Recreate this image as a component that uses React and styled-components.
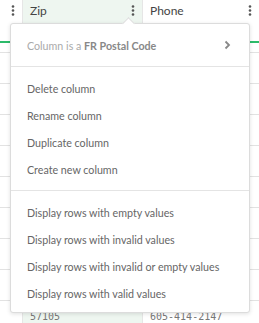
import React from 'react'
import styled, { createGlobalStyle } from 'styled-components'

const GlobalStyle = createGlobalStyle`
  html, body {
    margin: 0;
    padding: 0;
    background: #fff;
    overflow: hidden;
  }
  body {
    font-family: Lato, "Open Sans", "Liberation Sans", sans-serif;
  }
`

// rows under the open menu are covered, only the last one peeks out
const rows = [
  { zip: '', phone: '' },
  { zip: '', phone: '' },
  { zip: '', phone: '' },
  { zip: '', phone: '' },
  { zip: '', phone: '' },
  { zip: '', phone: '' },
  { zip: '', phone: '' },
  { zip: '', phone: '' },
  { zip: '57105', phone: '605-414-2147' },
]

function Kebab() {
  return (
    <svg width="4" height="11" viewBox="0 0 4 11">
      <circle cx="2" cy="1.5" r="1.3" fill="#555" />
      <circle cx="2" cy="5.5" r="1.3" fill="#555" />
      <circle cx="2" cy="9.5" r="1.3" fill="#555" />
    </svg>
  )
}

function App() {
  return (
    <>
      <GlobalStyle />
      <Page>
        <Grid>
          <Column $width={23}>
            <HeaderCell>
              <HeaderName />
              <Kebab />
            </HeaderCell>
            <QualityRow><Bar /></QualityRow>
            {rows.map((r, i) => <Cell key={i} />)}
          </Column>
          <Column $width={120} $selected>
            <HeaderCell>
              <HeaderName>Zip</HeaderName>
              <Kebab />
            </HeaderCell>
            <QualityRow><Bar /></QualityRow>
            {rows.map((r, i) => <Cell key={i}>{r.zip}</Cell>)}
          </Column>
          <Column $width={116}>
            <HeaderCell>
              <HeaderName>Phone</HeaderName>
              <Kebab />
            </HeaderCell>
            <QualityRow><Bar /></QualityRow>
            {rows.map((r, i) => <Cell key={i}>{r.phone}</Cell>)}
          </Column>
        </Grid>

        <Menu>
          <TypeRow>
            <span>Column is a <b>FR Postal Code</b></span>
            <svg width="7" height="10" viewBox="0 0 7 10">
              <polyline points="1.5,1.5 5,5 1.5,8.5" fill="none" stroke="#888" strokeWidth="1.8" />
            </svg>
          </TypeRow>
          <Divider />
          <Section $bottom={7}>
            <Item>Delete column</Item>
            <Item>Rename column</Item>
            <Item>Duplicate column</Item>
            <Item>Create new column</Item>
          </Section>
          <Divider />
          <Section $bottom={5}>
            <Item>Display rows with empty values</Item>
            <Item>Display rows with invalid values</Item>
            <Item>Display rows with invalid or empty values</Item>
            <Item>Display rows with valid values</Item>
          </Section>
        </Menu>
      </Page>
    </>
  )
}

export default App

const Page = styled.div`
  position: relative;
  width: 259px;
  height: 323px;
  overflow: hidden;
`

const Grid = styled.div`
  display: flex;
`

const Column = styled.div`
  flex: 0 0 ${p => p.$width}px;
  display: flex;
  flex-direction: column;
  border-right: 1px solid #e6e6e6;
  box-sizing: border-box;
  background: ${p => (p.$selected ? '#eef6f0' : '#fff')};
  &:last-child {
    border-right: none;
  }
`

const HeaderCell = styled.div`
  height: 20px;
  display: flex;
  align-items: center;
  justify-content: space-between;
  padding: 0 7px 0 7px;
`

const HeaderName = styled.span`
  font-size: 12px;
  color: #444;
`

const QualityRow = styled.div`
  height: 33px;
  display: flex;
  flex-direction: column;
  justify-content: flex-end;
  padding-bottom: 9px;
  box-sizing: border-box;
  border-bottom: 1px solid #e2e2e2;
`

const Bar = styled.div`
  height: 2px;
  background: #2dbb6a;
`

const Cell = styled.div`
  height: 31px;
  box-sizing: border-box;
  border-bottom: 1px solid #e2e2e2;
  display: flex;
  align-items: center;
  padding: 0 7px;
  font-family: "DejaVu Sans Mono", "Liberation Mono", monospace;
  font-size: 10px;
  color: #777;
`

const Menu = styled.div`
  position: absolute;
  left: 10px;
  top: 23px;
  width: 240px;
  box-sizing: border-box;
  background: #fff;
  border: 1px solid #dcdcdc;
  border-radius: 3px;
  box-shadow: 0 1px 4px rgba(0, 0, 0, 0.12);
  color: #666;
  font-size: 10.7px;

  &::before {
    content: '';
    position: absolute;
    left: 113px;
    top: -5px;
    width: 8px;
    height: 8px;
    background: #fff;
    border-left: 1px solid #dcdcdc;
    border-top: 1px solid #dcdcdc;
    transform: rotate(45deg);
  }
`

const TypeRow = styled.div`
  height: 42px;
  display: flex;
  align-items: center;
  justify-content: space-between;
  padding: 0 18px 0 16px;
  color: #aaa;
  b {
    color: #888;
    font-weight: 700;
  }
`

const Divider = styled.div`
  height: 1px;
  background: #e4e4e4;
`

const Section = styled.div`
  display: flex;
  flex-direction: column;
  padding: 8px 0 ${p => p.$bottom}px;
`

const Item = styled.div`
  height: 27px;
  display: flex;
  align-items: center;
  padding: 0 16px;
`
